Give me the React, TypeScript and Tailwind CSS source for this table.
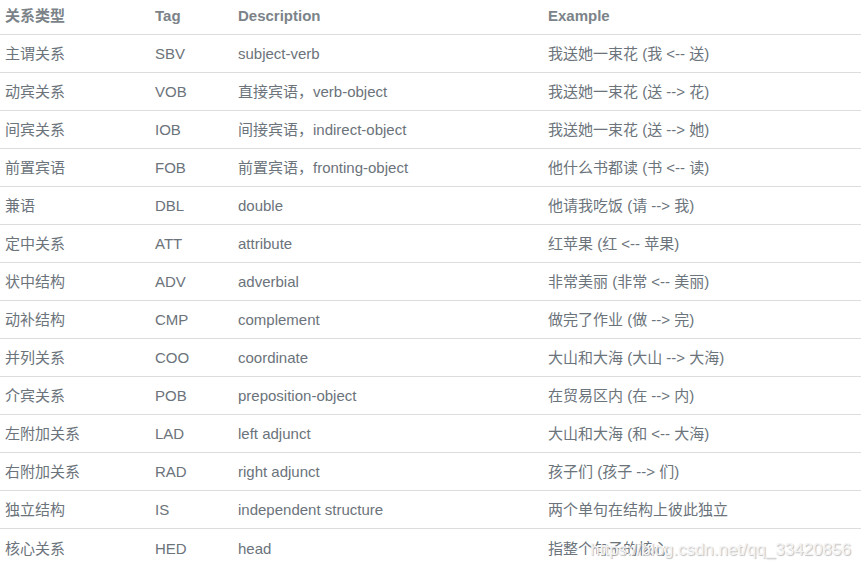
const rows: [string, string, string, string][] = [
  ["主谓关系", "SBV", "subject-verb", "我送她一束花 (我 <-- 送)"],
  ["动宾关系", "VOB", "直接宾语，verb-object", "我送她一束花 (送 --> 花)"],
  ["间宾关系", "IOB", "间接宾语，indirect-object", "我送她一束花 (送 --> 她)"],
  ["前置宾语", "FOB", "前置宾语，fronting-object", "他什么书都读 (书 <-- 读)"],
  ["兼语", "DBL", "double", "他请我吃饭 (请 --> 我)"],
  ["定中关系", "ATT", "attribute", "红苹果 (红 <-- 苹果)"],
  ["状中结构", "ADV", "adverbial", "非常美丽 (非常 <-- 美丽)"],
  ["动补结构", "CMP", "complement", "做完了作业 (做 --> 完)"],
  ["并列关系", "COO", "coordinate", "大山和大海 (大山 --> 大海)"],
  ["介宾关系", "POB", "preposition-object", "在贸易区内 (在 --> 内)"],
  ["左附加关系", "LAD", "left adjunct", "大山和大海 (和 <-- 大海)"],
  ["右附加关系", "RAD", "right adjunct", "孩子们 (孩子 --> 们)"],
  ["独立结构", "IS", "independent structure", "两个单句在结构上彼此独立"],
  ["核心关系", "HED", "head", "指整个句子的核心"],
];

const cols = "grid grid-cols-[150px_83px_310px_1fr] items-center pl-[5px]";

export default function App() {
  return (
    <div
      className="relative h-[568px] w-[861px] overflow-hidden bg-white text-[15px]"
      style={{ fontFamily: '"Liberation Sans", Arial, "Noto Sans CJK SC", sans-serif' }}
    >
      <div className={`${cols} h-[35px] border-b border-[#dddddd] pb-[2px] font-bold text-[#7b8389]`}>
        <span>关系类型</span>
        <span>Tag</span>
        <span>Description</span>
        <span>Example</span>
      </div>
      {rows.map((r) => (
        <div key={r[1]} className={`${cols} h-[38px] border-b border-[#dddddd] pt-[2px] text-[#6b737b] last-of-type:border-b-0`}>
          {r.map((c, i) => (
            <span key={i} className="whitespace-nowrap">
              {c}
            </span>
          ))}
        </div>
      ))}
      {/* csdn watermark */}
      <span className="absolute left-[590px] top-[537px] whitespace-nowrap text-[17px] text-[#f4f4f4] [text-shadow:1px_1px_1px_#bdbdbd]">
        https://blog.csdn.net/qq_33420856
      </span>
    </div>
  );
}
